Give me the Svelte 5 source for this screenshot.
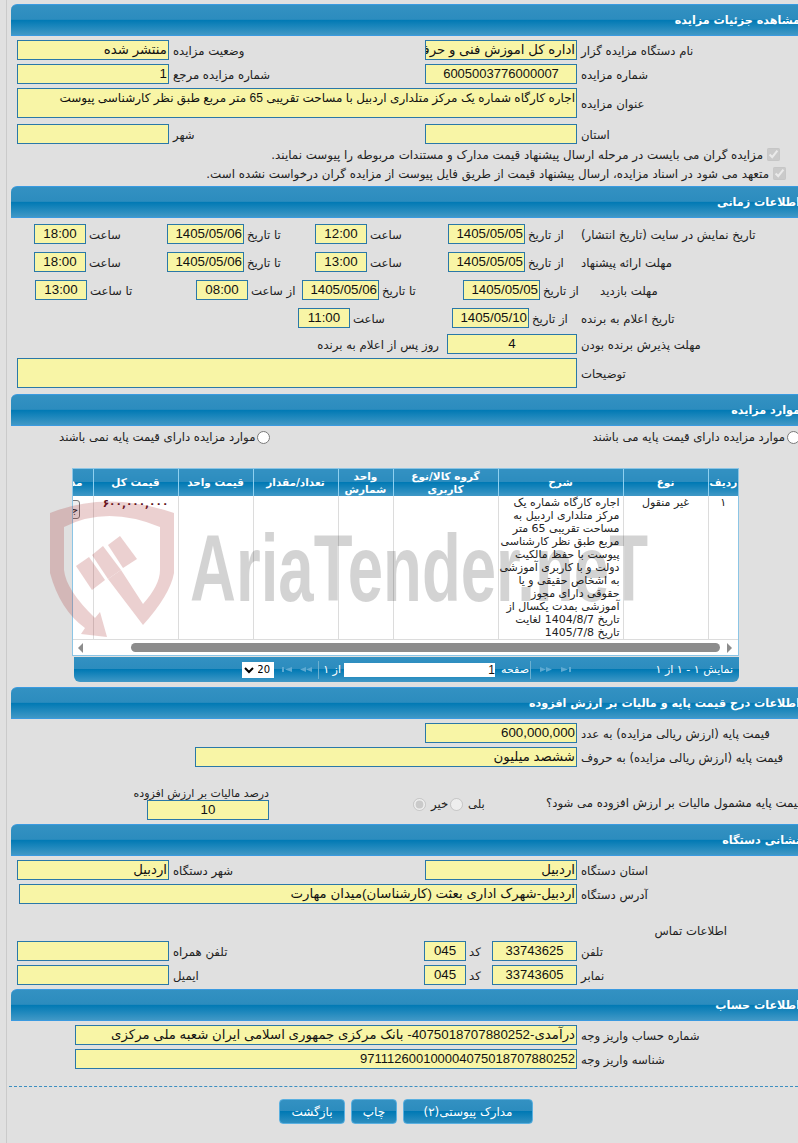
<script>
	const descLines = [
		'اجاره کارگاه شماره یک',
		'مرکز متلداری اردبیل به',
		'مساحت تقریبی 65 متر',
		'مربع طبق نظر کارشناسی',
		'پیوست با حفظ مالکیت',
		'دولت و با کاربری آموزشی',
		'به اشخاص حقیقی و یا',
		'حقوقی دارای مجوز',
		'آموزشی بمدت یکسال از',
		'تاریخ 1404/8/7 لغایت',
		'تاریخ 1405/7/8'
	];
	const columns = ['ردیف', 'نوع', 'شرح', 'گروه کالا/نوع کاربری', 'واحد شمارش', 'تعداد/مقدار', 'قیمت واحد', 'قیمت کل', 'مدیریت'];
</script>

<div class="page">
	<div class="panel">
		<h2><span>مشاهده جزئیات مزایده</span></h2>
		<div class="body pb6">
			<div class="row r2">
				<div class="inp">منتشر شده</div>
				<div class="lb">وضعیت مزایده</div>
				<div class="inp">اداره کل اموزش فنی و حرفه ای استان اردبیل</div>
				<div class="lb">نام دستگاه مزایده گزار</div>
			</div>
			<div class="row r2">
				<div class="inp">1</div>
				<div class="lb">شماره مزایده مرجع</div>
				<div class="inp mid num">6005003776000007</div>
				<div class="lb">شماره مزایده</div>
			</div>
			<div class="row wide560">
				<div class="inp area">اجاره کارگاه شماره یک مرکز متلداری اردبیل با مساحت تقریبی 65 متر مربع طبق نظر کارشناسی پیوست</div>
				<div class="lb">عنوان مزایده</div>
			</div>
			<div class="row r2 mt2">
				<div class="inp"></div>
				<div class="lb">شهر</div>
				<div class="inp"></div>
				<div class="lb">استان</div>
			</div>
			<label class="check c1">
				<input type="checkbox" checked disabled />
				<span>مزایده گران می بایست در مرحله ارسال پیشنهاد قیمت مدارک و مستندات مربوطه را پیوست نمایند.</span>
			</label>
			<label class="check c2">
				<input type="checkbox" checked disabled />
				<span>متعهد می شود در اسناد مزایده، ارسال پیشنهاد قیمت از طریق فایل پیوست از مزایده گران درخواست نشده است.</span>
			</label>
		</div>

		<h2><span>اطلاعات زمانی</span></h2>
		<div class="body times">
			<div class="row t1">
				<div class="inp mid">18:00</div>
				<div class="lb">ساعت</div>
				<div class="inp">1405/05/06</div>
				<div class="lb">تا تاریخ</div>
				<div class="inp mid">12:00</div>
				<div class="lb">ساعت</div>
				<div class="inp">1405/05/05</div>
				<div class="lb">از تاریخ</div>
				<div class="lb main">تاریخ نمایش در سایت (تاریخ انتشار)</div>
			</div>
			<div class="row t1 mt4">
				<div class="inp mid">18:00</div>
				<div class="lb">ساعت</div>
				<div class="inp">1405/05/06</div>
				<div class="lb">تا تاریخ</div>
				<div class="inp mid">13:00</div>
				<div class="lb">ساعت</div>
				<div class="inp">1405/05/05</div>
				<div class="lb">از تاریخ</div>
				<div class="lb main">مهلت ارائه پیشنهاد</div>
			</div>
			<div class="row t2 mt4">
				<div class="inp mid">13:00</div>
				<div class="lb">تا ساعت</div>
				<div class="inp mid">08:00</div>
				<div class="lb">از ساعت</div>
				<div class="inp">1405/05/06</div>
				<div class="lb">تا تاریخ</div>
				<div class="inp">1405/05/05</div>
				<div class="lb">از تاریخ</div>
				<div class="lb main">مهلت بازدید</div>
			</div>
			<div class="row t3 mt4">
				<div class="inp mid">11:00</div>
				<div class="lb">ساعت</div>
				<div class="inp">1405/05/10</div>
				<div class="lb">از تاریخ</div>
				<div class="lb main">تاریخ اعلام به برنده</div>
			</div>
			<div class="row t4 mt2">
				<div class="lb after">روز پس از اعلام به برنده</div>
				<div class="inp mid">4</div>
				<div class="lb end">مهلت پذیرش برنده بودن</div>
			</div>
			<div class="row wide560">
				<div class="inp area"></div>
				<div class="lb end">توضیحات</div>
			</div>
		</div>

		<h2><span>موارد مزایده</span></h2>
		<div class="body pb5">
			<div class="radios">
				<input type="radio" name="base" />
				<span>موارد مزایده دارای قیمت پایه می باشند</span>
				<input class="second" type="radio" name="base" />
				<span>موارد مزایده دارای قیمت پایه نمی باشند</span>
			</div>
			<div class="grid-box">
				<div class="table-clip">
					<table>
						<thead>
							<tr>
								{#each columns as c}<th>{c}</th>{/each}
							</tr>
						</thead>
						<tbody>
							<tr>
								<td class="center">۱</td>
								<td class="center">غیر منقول</td>
								<td>{#each descLines as line}{line}<br />{/each}</td>
								<td></td>
								<td></td>
								<td></td>
								<td></td>
								<td class="price">۶۰۰,۰۰۰,۰۰۰</td>
								<td class="manage"><button>جزئیات</button></td>
							</tr>
						</tbody>
					</table>
				</div>
				<div class="scroll">
					<i class="arrow left"></i>
					<div class="thumb"></div>
					<i class="arrow right"></i>
				</div>
			</div>
			<div class="pager">
				<select dir="rtl"><option>20</option></select>
				<svg class="pg first" width="10" height="5" viewBox="0 0 10 8" preserveAspectRatio="none"><path d="M0 0h2v8H0zM10 0v8L3 4z" /></svg>
				<svg class="pg prev" width="12" height="5" viewBox="0 0 12 8" preserveAspectRatio="none"><path d="M6 0v8L0 4zM12 0v8L6 4z" /></svg>
				<div class="sep s1"></div>
				<span class="of">از ۱</span>
				<div class="page-box">1</div>
				<span class="word">صفحه</span>
				<div class="sep s2"></div>
				<svg class="pg next" width="12" height="5" viewBox="0 0 12 8" preserveAspectRatio="none"><path d="M0 0v8l6-4zM6 0v8l6-4z" /></svg>
				<svg class="pg last" width="10" height="5" viewBox="0 0 10 8" preserveAspectRatio="none"><path d="M0 0v8l7-4zM8 0h2v8H8z" /></svg>
				<span class="shown">نمایش ۱ - ۱ از ۱</span>
			</div>
		</div>

		<h2><span>اطلاعات درج قیمت پایه و مالیات بر ارزش افزوده</span></h2>
		<div class="body pb4">
			<div class="row w152">
				<div class="inp">600,000,000</div>
				<div class="lb">قیمت پایه (ارزش ریالی مزایده) به عدد</div>
			</div>
			<div class="row w382">
				<div class="inp">ششصد میلیون</div>
				<div class="lb">قیمت پایه (ارزش ریالی مزایده) به حروف</div>
			</div>
			<div class="row tax">
				<div class="tax-box">
					<div class="tax-lb">درصد مالیات بر ارزش افزوده</div>
					<div class="inp mid">10</div>
				</div>
				<div class="yesno">
					<input type="radio" name="tax" checked disabled />
					<span class="no">خیر</span>
					<input type="radio" name="tax" disabled />
					<span class="yes">بلی</span>
				</div>
				<div class="lb question">قیمت پایه مشمول مالیات بر ارزش افزوده می شود؟</div>
			</div>
		</div>

		<h2><span>نشانی دستگاه</span></h2>
		<div class="body pb4">
			<div class="row r2">
				<div class="inp">اردبیل</div>
				<div class="lb">شهر دستگاه</div>
				<div class="inp">اردبیل</div>
				<div class="lb">استان دستگاه</div>
			</div>
			<div class="row addr">
				<div class="inp">اردبیل-شهرک اداری بعثت (کارشناسان)میدان مهارت</div>
				<div class="lb">آدرس دستگاه</div>
			</div>
			<div class="contact">اطلاعات تماس</div>
			<div class="row phone">
				<div class="inp"></div>
				<div class="lb">تلفن همراه</div>
				<div class="inp mid">045</div>
				<div class="lb code">کد</div>
				<div class="inp mid num">33743625</div>
				<div class="lb">تلفن</div>
			</div>
			<div class="row phone">
				<div class="inp"></div>
				<div class="lb">ایمیل</div>
				<div class="inp mid">045</div>
				<div class="lb code">کد</div>
				<div class="inp mid num">33743605</div>
				<div class="lb">نمابر</div>
			</div>
		</div>

		<h2><span>اطلاعات حساب</span></h2>
		<div class="body">
			<div class="row w502">
				<div class="inp">درآمدی-4075018707880252- بانک مرکزی جمهوری اسلامی ایران شعبه ملی مرکزی</div>
				<div class="lb">شماره حساب واریز وجه</div>
			</div>
			<div class="row w502">
				<div class="inp num">971112600100004075018707880252</div>
				<div class="lb">شناسه واریز وجه</div>
			</div>
		</div>

		<div class="dash"></div>
		<div class="buttons">
			<button class="btn b1">بازگشت</button>
			<button class="btn b2">چاپ</button>
			<button class="btn b3">مدارک پیوستی(۲)</button>
		</div>
	</div>

	<svg class="mark" width="798" height="1143" viewBox="0 0 798 1143">
		<g fill="#a01818" opacity="0.2">
			<path d="M50 513Q107 490 174 513L174 573Q170 595 143 625L108 579L121 570L143 604Q160 585 160 570L160 527Q107 505 64 527L64 570Q66 590 95 618L100 612L107 637L81 634L85 628Q60 610 50 573Z" />
			<path d="M76 566L89 557L105 580L92 590Z" />
			<path d="M92 555L103 546L121 570L108 579Z" />
			<path d="M108 545L120 536L137 559L123 568Z" />
		</g>
		<text x="190" y="601" font-size="95" font-weight="700" textLength="458" lengthAdjust="spacingAndGlyphs" opacity="0.17">AriaTender.neT</text>
	</svg>
</div>

<style>
	:global(body) {
		background: #e0e0e0;
	}
	.page {
		position: relative;
		width: 798px;
		height: 1143px;
		overflow: hidden;
		background: #e0e0e0;
		font-family: 'DejaVu Sans', sans-serif;
		font-size: 11.7px;
		color: #222;
	}
	.panel {
		margin-left: 6px;
		padding: 4px 0 0 4px;
		width: 792px;
		height: 100%;
		box-sizing: border-box;
		border-left: 1px solid #cacaca;
	}
	h2 {
		margin: 0;
		height: 32px;
		box-sizing: border-box;
		display: flex;
		align-items: center;
		overflow: hidden;
		direction: rtl;
		border-top: 1px solid #3a9ae0;
		border-bottom: 1px solid #3a9ae0;
		border-top-left-radius: 6px;
		background: linear-gradient(#3391c2, #2c8cbe 48%, #0079b4 50%, #4098c6);
		color: #fff;
		font-size: 11.2px;
		font-weight: 700;
	}
	h2 span {
		margin-right: -2px;
		white-space: nowrap;
	}
	.body {
		display: flex;
		flex-direction: column;
		gap: 4px;
		padding-top: 4px;
	}
	.pb4 {
		padding-bottom: 4px;
	}
	.pb5 {
		padding-bottom: 5px;
	}
	.pb6 {
		padding-bottom: 6px;
	}
	.mt2 {
		margin-top: 2px;
	}
	.mt4 {
		margin-top: 4px;
	}

	.row {
		display: grid;
		align-items: center;
		direction: ltr;
		margin-left: 6px;
	}
	.r2 {
		grid-template-columns: 152px 256px 152px 1fr;
	}
	.wide560 {
		grid-template-columns: 560px 1fr;
	}
	.w152 {
		grid-template-columns: 152px 1fr;
		margin-left: 414px;
	}
	.w382 {
		grid-template-columns: 382px 1fr;
		margin-left: 184px;
	}
	.w502 {
		grid-template-columns: 502px 1fr;
		margin-left: 64px;
	}
	.addr {
		grid-template-columns: 558px 1fr;
		margin-left: 8px;
	}
	.phone {
		grid-template-columns: 152px 255px 42px 26px 85px 1fr;
	}
	.inp {
		height: 20px;
		box-sizing: border-box;
		padding: 0 1px;
		overflow: hidden;
		direction: rtl;
		white-space: nowrap;
		line-height: 18px;
		background: #f8f5a6;
		border: 1px solid #2a78a8;
		color: #111;
		font-family: 'Liberation Sans', 'DejaVu Sans', sans-serif;
		font-size: 13.3px;
	}
	.num {
		font-size: 13px;
	}
	.mid {
		text-align: center;
	}
	.area {
		height: 30px;
		font-size: 12px;
	}
	.lb {
		padding: 1px 0 0 4px;
		min-width: 0;
		direction: rtl;
		text-align: left;
		white-space: nowrap;
	}
	.code {
		padding-left: 3px;
	}

	.check {
		display: flex;
		align-items: center;
		gap: 4px;
		height: 13px;
		direction: rtl;
		white-space: nowrap;
		font-size: 11.85px;
	}
	.check input {
		margin: 0;
	}
	.c1 {
		margin-right: 18px;
	}
	.c2 {
		margin-top: 2px;
		margin-right: 12px;
	}

	.times {
		padding-top: 6px;
		padding-bottom: 6px;
	}
	.times .lb {
		padding-left: 3px;
	}
	.times .main {
		padding-left: 0;
	}
	.times .end {
		padding-left: 4px;
	}
	.t1 {
		grid-template-columns: 52px 81px 77px 71px 52px 81px 77px 56px 1fr;
		margin-left: 23px;
	}
	.t2 {
		grid-template-columns: 52px 109px 52px 54px 77px 84px 77px 60px 1fr;
		margin-left: 24px;
	}
	.t3 {
		grid-template-columns: 52px 102px 77px 52px 1fr;
		margin-left: 287px;
	}
	.t4 {
		grid-template-columns: 430px 130px 1fr;
	}
	.times .after {
		text-align: right;
		padding: 1px 8px 0 0;
	}

	.radios {
		display: flex;
		align-items: center;
		gap: 2px;
		height: 14px;
		direction: rtl;
		white-space: nowrap;
		margin-right: -2px;
	}
	.radios input {
		margin: 0;
	}
	.radios .second {
		margin-right: 320px;
	}

	.grid-box {
		margin: 20px 0 0 61px;
		width: 667px;
		box-sizing: border-box;
		border: 1px solid #8cc5e5;
		background: #fff;
	}
	.table-clip {
		overflow: hidden;
		direction: rtl;
	}
	table {
		width: 700px;
		table-layout: fixed;
		border-collapse: collapse;
	}
	th {
		height: 27px;
		padding: 0;
		box-sizing: border-box;
		border-left: 1px solid #8fd0f0;
		background: linear-gradient(#3391c2, #2c8cbe 48%, #0079b4 50%, #4098c6);
		color: #fff;
		font-size: 10.5px;
		line-height: 13px;
		font-weight: 700;
	}
	th:nth-child(1) {
		width: 30px;
	}
	th:nth-child(2) {
		width: 85px;
	}
	th:nth-child(3) {
		width: 125px;
	}
	th:nth-child(4) {
		width: 105px;
	}
	th:nth-child(5) {
		width: 55px;
	}
	th:nth-child(6) {
		width: 85px;
	}
	th:nth-child(7) {
		width: 75px;
	}
	th:nth-child(8) {
		width: 85px;
	}
	th:nth-child(9) {
		width: 55px;
		border-left: 0;
		padding-right: 10px;
		text-align: right;
		white-space: nowrap;
		overflow: hidden;
	}
	td {
		padding: 0 3px;
		height: 143px;
		box-sizing: border-box;
		vertical-align: top;
		border-left: 1px solid #dcdcdc;
		border-bottom: 1px solid #dcdcdc;
		font-size: 11px;
		line-height: 13px;
		white-space: nowrap;
	}
	.center {
		text-align: center;
	}
	.price {
		padding-top: 1px;
		text-align: center;
		color: #5a1020;
		font-size: 10.5px;
		font-weight: 700;
	}
	.manage {
		padding: 4px 0 0;
		border-left: 0;
		overflow: hidden;
	}
	.manage button {
		float: left;
		width: 42px;
		height: 19px;
		padding: 0 1px;
		overflow: hidden;
		direction: rtl;
		text-align: right;
		font: 11px 'DejaVu Sans', sans-serif;
		color: #222;
		background: #eee;
		border: 1px solid #777;
		border-radius: 3px;
	}
	.scroll {
		display: flex;
		align-items: center;
		height: 15px;
		direction: ltr;
		padding-left: 5px;
	}
	.arrow {
		width: 0;
		height: 0;
		border-top: 5px solid transparent;
		border-bottom: 5px solid transparent;
	}
	.left {
		border-right: 5px solid #8c8c8c;
	}
	.right {
		margin-left: 7px;
		border-left: 5px solid #8c8c8c;
	}
	.thumb {
		margin-left: 48px;
		width: 589px;
		height: 9px;
		border-radius: 5px;
		background: #8c8c8c;
	}

	.pager {
		display: flex;
		align-items: center;
		margin: -3px 0 0 63px;
		width: 665px;
		height: 25px;
		box-sizing: border-box;
		padding-right: 6px;
		direction: ltr;
		border-bottom-left-radius: 6px;
		border-bottom-right-radius: 6px;
		background: linear-gradient(#3391c2, #2c8cbe 48%, #0079b4 50%, #4098c6);
		color: #fff;
		font-size: 11px;
		white-space: nowrap;
	}
	.pager select {
		margin-left: 168px;
		width: 32px;
		height: 16px;
		padding: 0;
		border: 0;
		border-radius: 0;
		background: #fff;
		font: 10px 'DejaVu Sans', sans-serif;
	}
	.pg {
		flex: none;
		fill: #5ea9d1;
	}
	.first {
		margin-left: 8px;
	}
	.prev {
		margin-left: 8px;
	}
	.sep {
		width: 1px;
		height: 18px;
		background: #6cb0d0;
	}
	.s1 {
		margin-left: 6px;
	}
	.of {
		margin-left: 5px;
		width: 17px;
		direction: rtl;
	}
	.page-box {
		margin-left: 3px;
		width: 151px;
		height: 14px;
		background: #fff;
		color: #111;
		direction: rtl;
		font: 12px/14px 'Liberation Sans', sans-serif;
	}
	.word {
		margin-left: 4px;
		width: 30px;
		direction: rtl;
	}
	.s2 {
		margin-left: 1px;
	}
	.next {
		margin-left: 9px;
	}
	.last {
		margin-left: 9px;
	}
	.shown {
		margin-left: auto;
		direction: rtl;
	}

	.tax {
		margin: 16px 0 0 136px;
		grid-template-columns: 266px 133px 1fr;
		align-items: start;
	}
	.tax-box {
		width: 122px;
	}
	.tax-lb {
		height: 13px;
		line-height: 13px;
		direction: rtl;
		white-space: nowrap;
		font-size: 11px;
	}
	.yesno {
		display: flex;
		align-items: center;
		direction: ltr;
		padding-top: 10px;
	}
	.yesno input {
		margin: 0;
	}
	.no {
		margin-left: 5px;
		width: 19px;
	}
	.yes {
		margin-left: 5px;
	}
	.question {
		padding: 9px 0 0;
		justify-self: start;
		width: max-content;
	}

	.contact {
		direction: rtl;
		height: 13px;
		margin: 16px 71px 0 0;
	}

	.dash {
		margin: 17px 0 0 -2px;
		border-top: 1px dashed #3d8fc0;
	}
	.buttons {
		display: flex;
		gap: 6px;
		margin: 12px 0 0 268px;
	}
	.btn {
		height: 25px;
		padding: 0;
		box-sizing: border-box;
		border: 1px solid #5ab0e0;
		border-radius: 4px;
		background: linear-gradient(#3391c2, #2c8cbe 48%, #0079b4 50%, #2f8fc0);
		color: #fff;
		font: 12px 'DejaVu Sans', sans-serif;
		direction: rtl;
	}
	.b1 {
		width: 66px;
	}
	.b2 {
		width: 46px;
	}
	.b3 {
		width: 130px;
	}

	.mark {
		position: absolute;
		top: 0;
		left: 0;
		pointer-events: none;
		font-family: 'Liberation Sans', sans-serif;
	}
</style>
